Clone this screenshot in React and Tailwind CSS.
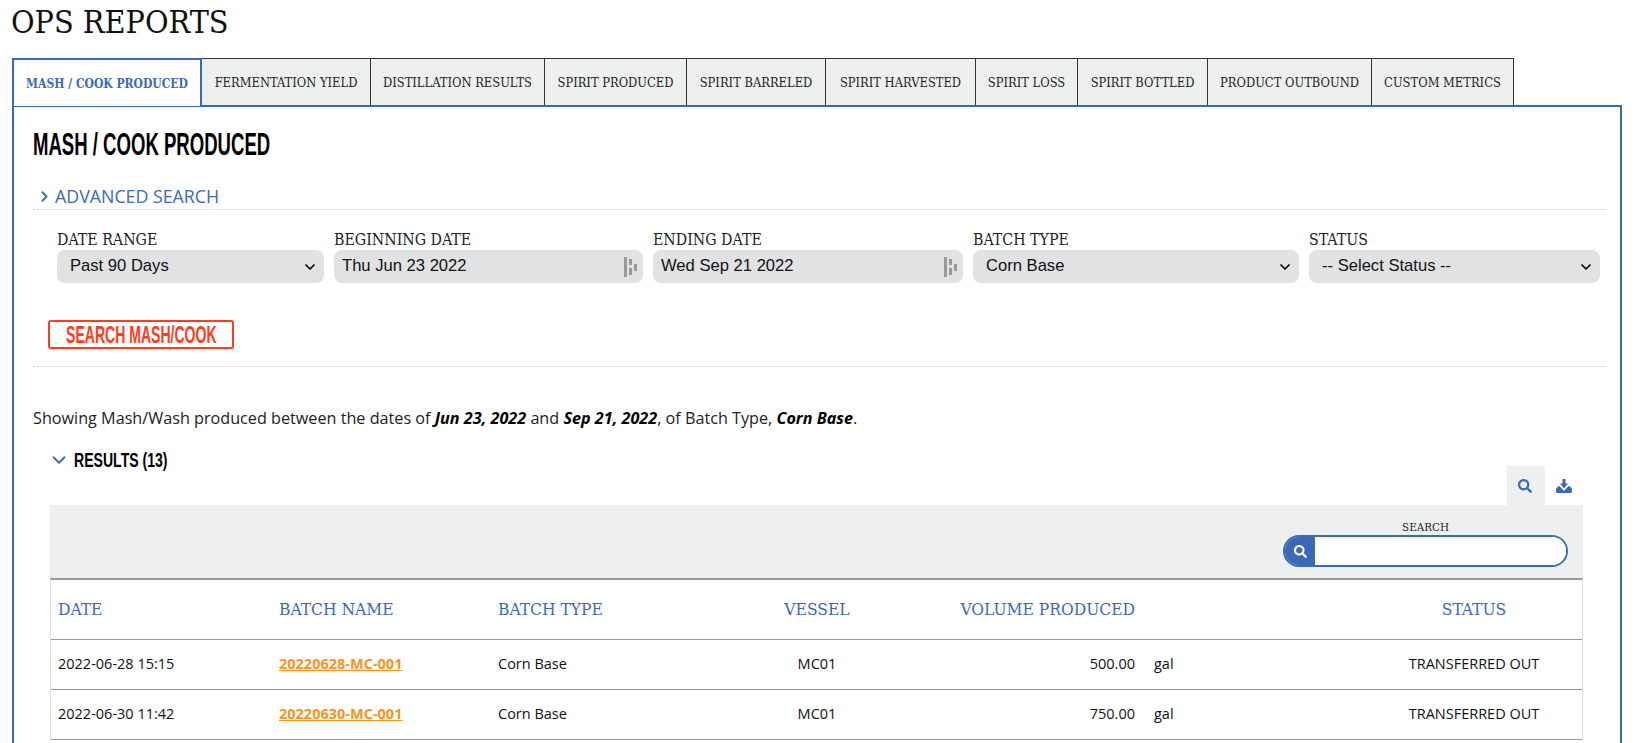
import { ChevronRight, ChevronDown } from "lucide-react";
import { FaSearch } from "react-icons/fa";

const slab = "font-['DejaVu_Serif_Condensed','DejaVu_Serif',serif]";
const display = "font-['Liberation_Sans',sans-serif] font-bold whitespace-nowrap inline-block";
const body = "font-['Open_Sans',sans-serif]";

const tabs = [
  { label: "FERMENTATION YIELD", w: "w-[169px]" },
  { label: "DISTILLATION RESULTS", w: "w-[174px]" },
  { label: "SPIRIT PRODUCED", w: "w-[142px]" },
  { label: "SPIRIT BARRELED", w: "w-[139px]" },
  { label: "SPIRIT HARVESTED", w: "w-[150px]" },
  { label: "SPIRIT LOSS", w: "w-[102px]" },
  { label: "SPIRIT BOTTLED", w: "w-[130px]" },
  { label: "PRODUCT OUTBOUND", w: "w-[164px]" },
  { label: "CUSTOM METRICS", w: "w-[142px]" },
];

const rows = [
  { date: "2022-06-28 15:15", batch: "20220628-MC-001", vol: "500.00" },
  { date: "2022-06-30 11:42", batch: "20220630-MC-001", vol: "750.00" },
];

const cols = "grid grid-cols-[221px_219px_248px_156px_250px_221px_216px]";

function Chevron() {
  return <ChevronDown size={16} strokeWidth={2.5} className="absolute right-[6px] top-[9px] text-black pointer-events-none" />;
}

function Field({ label, w, children }) {
  return (
    <div className={`${w} flex flex-col`}>
      <label className={`${slab} text-[15.8px] leading-[20px] text-[#222]`}>{label}</label>
      <div className="relative h-[33px]">{children}</div>
    </div>
  );
}

function SelectField({ label, w, value }) {
  return (
    <Field label={label} w={w}>
      <select defaultValue={value} className="appearance-none w-full h-full bg-[#e1e2e4] rounded-lg pl-[13px] pr-6 font-['Liberation_Sans',sans-serif] text-[16.6px] text-[#111] outline-none">
        <option>{value}</option>
      </select>
      <Chevron />
    </Field>
  );
}

function DateField({ label, w, value }) {
  return (
    <Field label={label} w={w}>
      <input readOnly value={value} className="w-full h-full bg-[#e1e2e4] rounded-lg pl-2 pb-[2px] font-['Liberation_Sans',sans-serif] text-[16.6px] text-[#111] outline-none" />
      <svg width="13" height="20" viewBox="0 0 13 20" className="absolute right-[6px] top-[7px] text-[#999]" fill="currentColor">
        <rect x="0" y="0" width="3" height="20" />
        <rect x="5" y="2" width="3" height="6" />
        <rect x="5" y="11" width="3" height="7" />
        <rect x="10" y="7" width="3" height="7" />
      </svg>
    </Field>
  );
}

export default function App() {
  return (
    <div className="h-[743px] overflow-hidden bg-white text-black">
      <h1 className={`${slab} text-[32px] leading-[44px] pl-[11px] text-[#111]`}>OPS REPORTS</h1>

      <div className="mt-[14px] ml-[12px] mr-[13px] flex h-[47px] relative z-10">
        <div className={`w-[190px] h-[48px] pt-[2px] bg-white border-2 border-b-0 border-[#3b69b7] flex items-center justify-center whitespace-nowrap ${slab} font-bold text-[12px] text-[#3b69b7]`}>
          MASH / COOK PRODUCED
        </div>
        {tabs.map((t) => (
          <div key={t.label} className={`${t.w} pt-[2px] bg-[#eef0ef] border border-l-0 border-b-0 border-[#333] flex items-center justify-center whitespace-nowrap ${slab} text-[12.8px] text-[#222]`}>
            {t.label}
          </div>
        ))}
      </div>

      <div className="ml-[12px] mr-[13px] h-[640px] border-2 border-[#3b69b7] pl-[19px] pr-[15px]">
        <div className="mt-[19px] h-[36px] leading-[36px]">
          <h2 className={`${display} text-[32px] text-black origin-left scale-x-[0.58]`}>MASH / COOK PRODUCED</h2>
        </div>

        <div className="mt-[21px] flex items-center border-b border-dotted border-[#ccc] h-[27px]">
          <ChevronRight size={17} strokeWidth={2.5} className="text-[#3b69b7] ml-[3px]" />
          <span className={`${body} ml-[2px] text-[17.8px] text-[#3b69b7]`}>ADVANCED SEARCH</span>
        </div>

        <div className="mt-[20px] pl-[24px] flex gap-[10px]">
          <SelectField label="DATE RANGE" w="w-[267px]" value="Past 90 Days" />
          <DateField label="BEGINNING DATE" w="w-[309px]" value="Thu Jun 23 2022" />
          <DateField label="ENDING DATE" w="w-[310px]" value="Wed Sep 21 2022" />
          <SelectField label="BATCH TYPE" w="w-[326px]" value="Corn Base" />
          <SelectField label="STATUS" w="w-[291px]" value="-- Select Status --" />
        </div>

        <button className="mt-[37px] ml-[15px] flex items-center justify-center w-[186px] h-[29px] pt-[2px] border-2 border-[#fc3d1e] rounded-[3px] overflow-hidden">
          <span className={`${display} text-[23px] leading-none text-[#fc3d1e] scale-x-[0.61]`}>SEARCH MASH/COOK</span>
        </button>

        <div className="mt-[17px] border-b border-dotted border-[#ccc]" />

        <p className={`${body} mt-[41px] text-[16.2px] leading-[20px] text-[#222]`}>
          Showing Mash/Wash produced between the dates of <b className="italic text-black">Jun 23, 2022</b> and <b className="italic text-black">Sep 21, 2022</b>, of Batch Type, <b className="italic text-black">Corn Base</b>.
        </p>

        <div className="mt-[19px] ml-[15px] flex items-center h-[26px]">
          <ChevronDown size={22} strokeWidth={2} className="text-[#3b69b7]" />
          <span className={`${display} text-[21px] ml-[4px] text-black origin-left scale-x-[0.67]`}>RESULTS (13)</span>
        </div>

        <div className="ml-[17px] w-[1533px]">
          <div className="flex justify-end h-[39px] -mt-[7px]">
            <div className="w-[38px] bg-[#eef0ef] flex items-center justify-center text-[#3b69b7] pr-[3px]">
              <FaSearch size={14} />
            </div>
            <div className="w-[38px] flex items-center justify-center text-[#3b69b7]">
              <svg width="16" height="14" viewBox="0 0 16 14" fill="currentColor">
                <path d="M6.5 0H9.5V4.5H12L8 9.5L4 4.5H6.5Z" />
                <path d="M0 11C0 9 1.5 7.5 3.5 7L6 9.8L8 12L10 9.8L12.5 7C14.5 7.5 16 9 16 11V12.5Q16 14 14.5 14H1.5Q0 14 0 12.5Z" />
              </svg>
            </div>
          </div>

          <div className="bg-[#eef0ef] h-[73px] flex justify-end pr-[15px] pt-[14px]">
            <div className="w-[285px] flex flex-col items-center">
              <span className={`${slab} text-[11.5px] leading-[16px] text-[#222]`}>SEARCH</span>
              <div className="h-[32px] w-full flex rounded-full border-2 border-[#3b69b7] bg-white overflow-hidden">
                <div className="w-[30px] bg-[#3b69b7] flex items-center justify-center text-white">
                  <FaSearch size={13} />
                </div>
                <input className="flex-1 min-w-0 outline-none bg-white" />
              </div>
            </div>
          </div>

          <div className="border-t-2 border-[#999] border-l border-r border-l-[#ddd] border-r-[#ddd]">
            <div className={`${cols} h-[60px] items-center border-b border-[#999] ${slab} text-[17.3px] text-[#3b69b7]`}>
              <div className="pl-[7px]">DATE</div>
              <div className="pl-[7px]">BATCH NAME</div>
              <div className="pl-[7px]">BATCH TYPE</div>
              <div className="text-center">VESSEL</div>
              <div className="text-right pr-[10px]">VOLUME PRODUCED</div>
              <div />
              <div className="text-center">STATUS</div>
            </div>
            {rows.map((r, i) => (
              <div key={r.batch} className={`${cols} h-[50px] items-center border-b border-[#999] ${i === 0 ? "pb-[2px]" : "pb-[1px]"} ${body} text-[14.5px] text-[#111]`}>
                <div className="pl-[7px]">{r.date}</div>
                <div className="pl-[7px]">
                  <a href="#" className="font-bold underline text-[#f7931e]">{r.batch}</a>
                </div>
                <div className="pl-[7px]">Corn Base</div>
                <div className="text-center">MC01</div>
                <div className="text-right pr-[10px]">{r.vol}</div>
                <div className="pl-[9px]">gal</div>
                <div className="text-center">TRANSFERRED OUT</div>
              </div>
            ))}
          </div>
        </div>
      </div>
    </div>
  );
}
